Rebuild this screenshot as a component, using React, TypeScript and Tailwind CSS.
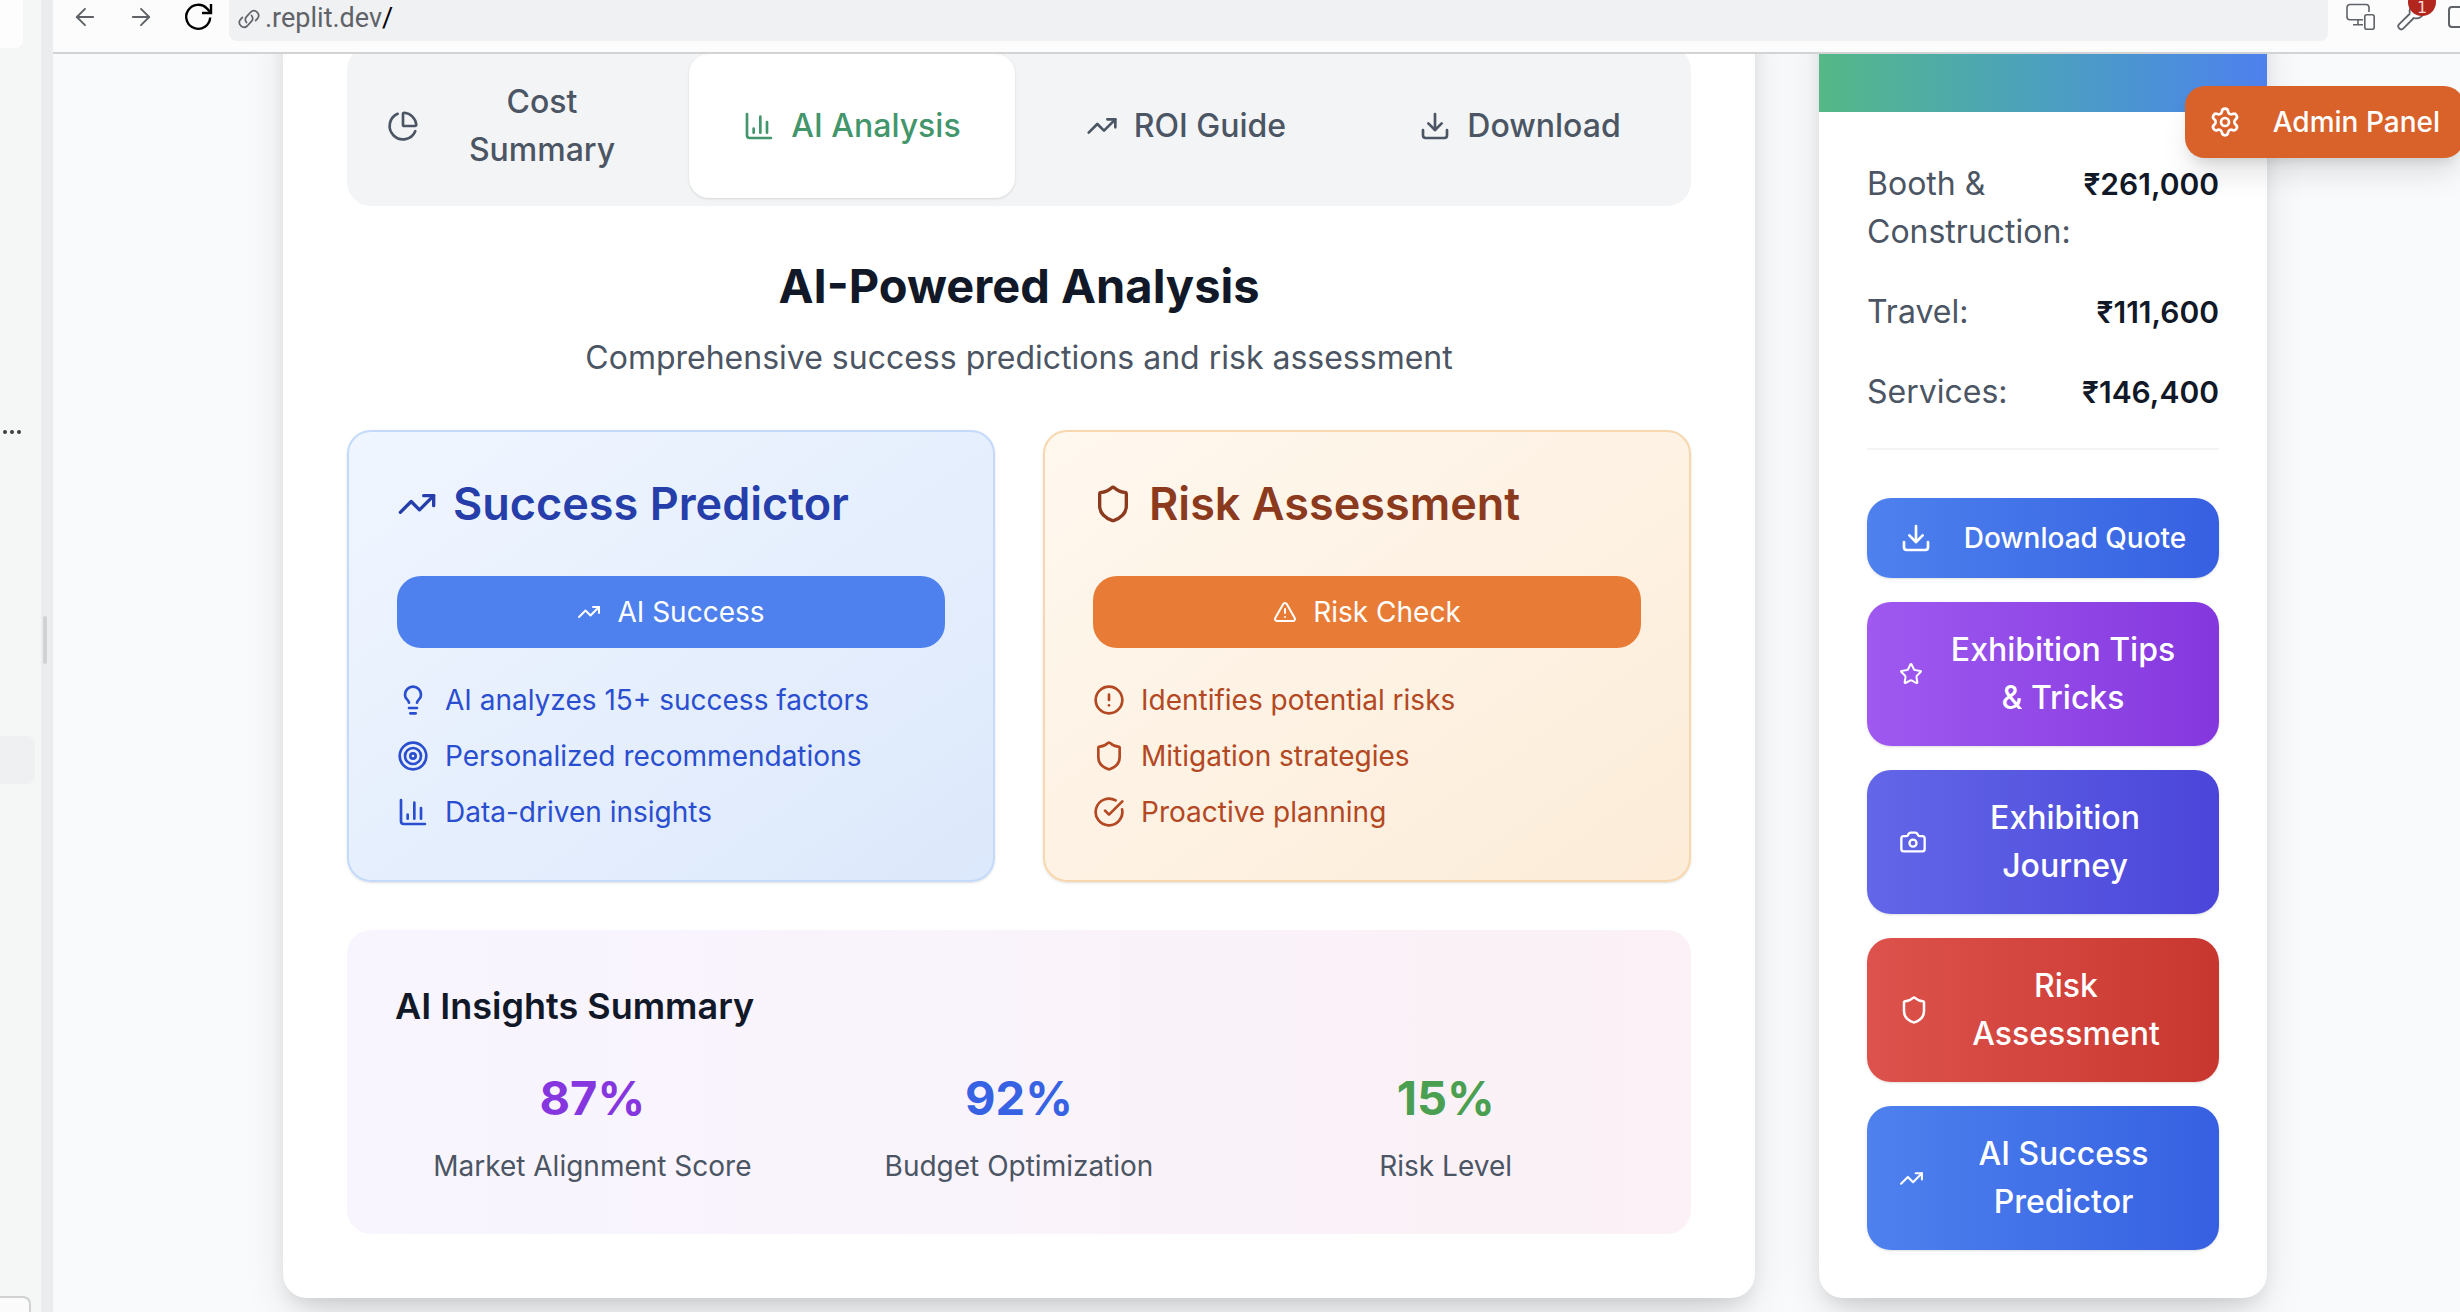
import type { ReactNode } from 'react';
import {
  ArrowLeft,
  ArrowRight,
  Camera,
  ChartColumn,
  ChartPie,
  CircleAlert,
  CircleCheckBig,
  Download,
  Lightbulb,
  Settings,
  Shield,
  Star,
  Target,
  TrendingUp,
  TriangleAlert,
  type LucideIcon,
} from 'lucide-react';

function ReloadIcon() {
  return (
    <svg width="30" height="30" viewBox="0 0 30 30" fill="none" stroke="#000" strokeWidth="2.4">
      <path d="M27.2 15.5A12 12 0 1 1 24 6.6l3 3.2" />
      <path d="M28 2v9h-9" />
    </svg>
  );
}

function LinkIcon() {
  return (
    <svg width="24" height="24" viewBox="0 0 24 24" fill="none" stroke="#5f6368" strokeWidth="1.7" strokeLinecap="round">
      <path d="M9.5 15.5A4.6 4.6 0 0 1 9.8 9.4l4-4.4a4.7 4.7 0 0 1 6.8 6.4l-2 2.2" />
      <path d="M14.5 8.5a4.6 4.6 0 0 1-.3 6.1l-4 4.4a4.7 4.7 0 0 1-6.8-6.4l2-2.2" />
    </svg>
  );
}

function DevicesIcon() {
  return (
    <svg width="30" height="30" viewBox="0 0 30 30" fill="none" stroke="#5f6368" strokeWidth="1.6">
      <path d="M17 17.800H4a3 3 0 0 1-3-3V5.500a3 3 0 0 1 3-3h16a3 3 0 0 1 3 3V10" />
      <path d="M12 18v5M7 22.800h10" />
      <rect x="18.800" y="12.800" width="9.400" height="14.400" rx="2" />
    </svg>
  );
}

function WrenchIcon() {
  return (
    <svg width="32" height="32" viewBox="0 0 32 32" fill="none" stroke="#5f6368" strokeWidth="1.800" strokeLinejoin="round">
      <path d="M14 12.500 3.200 23.200a3 3 0 0 0 0 4.200 3 3 0 0 0 4.200 0L17.800 17c4.500 1.500 9-1 9.800-5" />
      <path d="M14 12.500c-1.200-4 .6-8 4-9.500" />
    </svg>
  );
}

function BrowserBar() {
  return (
    <header className="flex h-[54px] items-start justify-between overflow-hidden border-b-2 border-[#d1d3d5] bg-[#fcfcfc]">
      <div className="flex h-[34px] items-center gap-7 pl-[18px] text-[#5f6368]">
        <button type="button" aria-label="Back">
          <ArrowLeft size={28} strokeWidth={1.6} />
        </button>
        <button type="button" aria-label="Forward">
          <ArrowRight size={28} strokeWidth={1.6} />
        </button>
        <button type="button" aria-label="Reload">
          <ReloadIcon />
        </button>
      </div>
      <a
        href="#"
        className="ml-4 flex h-[41px] flex-1 items-center gap-1 rounded-b-lg bg-[#f0f1f3] pb-1 pl-2 text-[27px] text-[#5f6368]"
      >
        <LinkIcon />
        <span className="font-['Roboto',sans-serif]">
          .replit.dev<span className="text-black">/</span>
        </span>
      </a>
      <div className="flex h-[34px] w-[132px] shrink-0 items-center gap-5 pl-[18px]">
        <button type="button" aria-label="Devices" className="shrink-0">
          <DevicesIcon />
        </button>
        <button type="button" aria-label="Tools" className="relative shrink-0">
          <WrenchIcon />
          <span className="absolute -top-[13px] left-3 flex size-7 items-end justify-center rounded-full bg-[#b3261e] pb-0.5 font-['DejaVu_Sans',sans-serif] text-[16px] leading-[13px] text-[#fadcd9]">
            1
          </span>
        </button>
        <span className="h-[22px] w-7 shrink-0 rounded border-2 border-[#5f6368]" />
      </div>
    </header>
  );
}

function LeftRail() {
  return (
    <aside className="flex w-[41px] shrink-0 flex-col items-start overflow-hidden bg-[#f5f7f6]">
      <div className="h-12 w-[23px] shrink-0 rounded-br-lg bg-[#fdfdfd]" />
      <div className="mt-[382px] flex shrink-0 gap-[3px] pl-[3px]">
        <span className="size-1 rounded-full bg-[#3c3f44]" />
        <span className="size-1 rounded-full bg-[#3c3f44]" />
        <span className="size-1 rounded-full bg-[#3c3f44]" />
      </div>
      <div className="mt-[302px] h-12 w-[35px] shrink-0 rounded-r-lg bg-[#eff0f2]" />
      <div className="mt-[512px] h-12 w-[31px] shrink-0 rounded-tr-lg border-t-2 border-r-2 border-[#cfd1d3] bg-[#fafbfa]" />
    </aside>
  );
}

const tabs: { label: ReactNode; key: string; icon: LucideIcon; active?: boolean; wrap?: boolean }[] = [
  { key: 'cost', label: <>Cost<br />Summary</>, icon: ChartPie, wrap: true },
  { key: 'ai', label: 'AI Analysis', icon: ChartColumn, active: true },
  { key: 'roi', label: 'ROI Guide', icon: TrendingUp },
  { key: 'download', label: 'Download', icon: Download },
];

function Tabs() {
  return (
    <div role="tablist" className="grid grid-cols-4 gap-2 rounded-3xl bg-[#f3f4f6] p-2">
      {tabs.map(({ key, label, icon: Icon, active, wrap }) => (
        <button
          key={key}
          type="button"
          role="tab"
          aria-selected={!!active}
          className={
            active
              ? 'flex items-center justify-center gap-4 rounded-[20px] bg-white px-8 py-6 text-[32px] leading-[48px] font-medium text-[#43966b] shadow-sm'
              : 'flex items-center justify-center gap-4 rounded-[20px] px-8 py-6 text-[32px] leading-[48px] font-medium text-[#4b5563]'
          }
        >
          <Icon size={32} className="shrink-0" />
          <span className={wrap ? 'flex-1' : ''}>{label}</span>
        </button>
      ))}
    </div>
  );
}

function Bullets({ items, className }: { items: [LucideIcon, string][]; className: string }) {
  return (
    <ul className={className}>
      {items.map(([Icon, text]) => (
        <li key={text} className="flex items-center gap-4">
          <Icon size={32} className="shrink-0" />
          {text}
        </li>
      ))}
    </ul>
  );
}

const stats = [
  { value: '87%', label: 'Market Alignment Score', color: 'text-[#8636de]' },
  { value: '92%', label: 'Budget Optimization', color: 'text-[#3662e3]' },
  { value: '15%', label: 'Risk Level', color: 'text-[#4a9f51]' },
];

function Analysis() {
  return (
    <main className="min-w-0 flex-1 rounded-3xl bg-white p-16 shadow-[0_20px_50px_-10px_rgba(0,0,0,0.14),0_10px_20px_-6px_rgba(0,0,0,0.12)]">
      <Tabs />
      <div className="mt-12 text-center">
        <h2 className="text-[47px] leading-[64px] font-bold text-[#111827]">AI-Powered Analysis</h2>
        <p className="mt-4 text-[32px] leading-[48px] text-[#4b5563]">
          Comprehensive success predictions and risk assessment
        </p>
      </div>

      <div className="mt-12 grid grid-cols-2 gap-12">
        <section className="rounded-3xl border-2 border-[#c3dafa] bg-linear-to-br from-[#f0f6ff] to-[#dce8fb] p-12 shadow-sm">
          <h3 className="flex items-center gap-4 text-[45px] leading-[48px] font-semibold text-[#253eaa]">
            <TrendingUp size={40} className="shrink-0" />
            Success Predictor
          </h3>
          <button
            type="button"
            className="mt-12 flex h-[72px] w-full items-center justify-center gap-4 rounded-3xl bg-[#4e81ee] text-[28px] leading-10 text-white"
          >
            <TrendingUp size={24} />
            AI Success
          </button>
          <Bullets
            className="mt-8 flex flex-col gap-4 text-[28px] leading-10 text-[#2a4ed0]"
            items={[
              [Lightbulb, 'AI analyzes 15+ success factors'],
              [Target, 'Personalized recommendations'],
              [ChartColumn, 'Data-driven insights'],
            ]}
          />
        </section>
        <section className="rounded-3xl border-2 border-[#f7d7ad] bg-linear-to-br from-[#fff8ef] to-[#fcecd8] p-12 shadow-sm">
          <h3 className="flex items-center gap-4 text-[45px] leading-[48px] font-semibold text-[#8b3a1e]">
            <Shield size={40} className="shrink-0" />
            Risk Assessment
          </h3>
          <button
            type="button"
            className="mt-12 flex h-[72px] w-full items-center justify-center gap-4 rounded-3xl bg-[#e87c36] text-[28px] leading-10 text-white"
          >
            <TriangleAlert size={24} />
            Risk Check
          </button>
          <Bullets
            className="mt-8 flex flex-col gap-4 text-[28px] leading-10 text-[#b34822]"
            items={[
              [CircleAlert, 'Identifies potential risks'],
              [Shield, 'Mitigation strategies'],
              [CircleCheckBig, 'Proactive planning'],
            ]}
          />
        </section>
      </div>

      <section className="mt-12 rounded-3xl bg-linear-to-r from-[#f8f5ff] to-[#fbf1f6] p-12">
        <h3 className="text-[36px] leading-[56px] font-semibold text-[#111827]">AI Insights Summary</h3>
        <div className="mt-8 grid grid-cols-3 gap-8 text-center">
          {stats.map((s) => (
            <div key={s.label}>
              <div className={`text-[47px] leading-[64px] font-bold ${s.color}`}>{s.value}</div>
              <div className="mt-4 text-[28px] leading-10 text-[#4b5563]">{s.label}</div>
            </div>
          ))}
        </div>
      </section>
    </main>
  );
}

const costs = [
  ['Booth & Construction:', '₹261,000'],
  ['Travel:', '₹111,600'],
  ['Services:', '₹146,400'],
];

const actions: { key: string; label: ReactNode; icon: LucideIcon; size: number; bg: string }[] = [
  {
    key: 'tips',
    label: <>Exhibition Tips<br />&amp; Tricks</>,
    icon: Star,
    size: 24,
    bg: 'from-[#9f59f0] to-[#8537de]',
  },
  {
    key: 'journey',
    label: <>Exhibition<br />Journey</>,
    icon: Camera,
    size: 28,
    bg: 'from-[#6366e8] to-[#4b45d9]',
  },
  {
    key: 'risk',
    label: <>Risk<br />Assessment</>,
    icon: Shield,
    size: 30,
    bg: 'from-[#dd524c] to-[#c8372f]',
  },
  {
    key: 'predictor',
    label: <>AI Success<br />Predictor</>,
    icon: TrendingUp,
    size: 25,
    bg: 'from-[#4e81ee] to-[#3660e1]',
  },
];

function QuoteCard() {
  return (
    <aside className="w-[448px] shrink-0 overflow-hidden rounded-3xl bg-white shadow-[0_20px_50px_-10px_rgba(0,0,0,0.14),0_10px_20px_-6px_rgba(0,0,0,0.12)]">
      <div className="h-[130px] bg-linear-to-r from-[#54b886] to-[#4e80ee]" />
      <div className="p-12">
        <dl className="flex flex-col gap-8 border-b-2 border-[#f3f4f6] pb-8 text-[32px] leading-[48px]">
          {costs.map(([name, value]) => (
            <div key={name} className="flex items-start justify-between">
              <dt className="text-[#4b5563]">{name}</dt>
              <dd className="text-[30px] font-semibold text-[#111827]">{value}</dd>
            </div>
          ))}
        </dl>
        <div className="mt-12 flex flex-col gap-6 font-medium text-white">
          <button
            type="button"
            className="flex h-20 items-center justify-center gap-8 rounded-3xl bg-linear-to-r from-[#4e81ee] to-[#3660e1] text-[28px] whitespace-nowrap shadow-sm"
          >
            <Download size={32} className="shrink-0" />
            Download Quote
          </button>
          {actions.map(({ key, label, icon: Icon, size, bg }) => (
            <button
              key={key}
              type="button"
              className={`flex items-center gap-4 rounded-3xl bg-linear-to-r px-8 py-6 text-[32px] leading-[48px] shadow-sm ${bg}`}
            >
              <Icon size={size} className="shrink-0" />
              <span className="flex-1 whitespace-nowrap">{label}</span>
            </button>
          ))}
        </div>
      </div>
    </aside>
  );
}

export default function App() {
  return (
    <div className="flex h-screen overflow-hidden bg-[#f9fafc] font-['Inter','Noto_Sans',sans-serif]">
      <LeftRail />
      <div className="flex w-3 shrink-0 flex-col items-start bg-[#ebeced] pl-0.5">
        <div className="mt-[616px] h-12 w-1 rounded-full bg-[#d1d2d4]" />
      </div>
      <div className="flex min-w-0 flex-1 flex-col">
        <BrowserBar />
        <div className="relative min-h-0 flex-1 overflow-hidden">
          <div className="-mt-18 -mr-[37px] flex justify-center">
            <div className="flex w-full max-w-[1984px] items-start gap-16">
              <Analysis />
              <QuoteCard />
            </div>
          </div>
          <button
            type="button"
            className="absolute top-8 -right-1 flex h-[72px] items-center gap-8 rounded-[20px] bg-[#d9622a] px-6 text-[28px] font-medium whitespace-nowrap text-white shadow-[0_20px_30px_-6px_rgba(0,0,0,0.12),0_8px_12px_-6px_rgba(0,0,0,0.12)]"
          >
            <Settings size={32} />
            Admin Panel
          </button>
        </div>
      </div>
    </div>
  );
}
